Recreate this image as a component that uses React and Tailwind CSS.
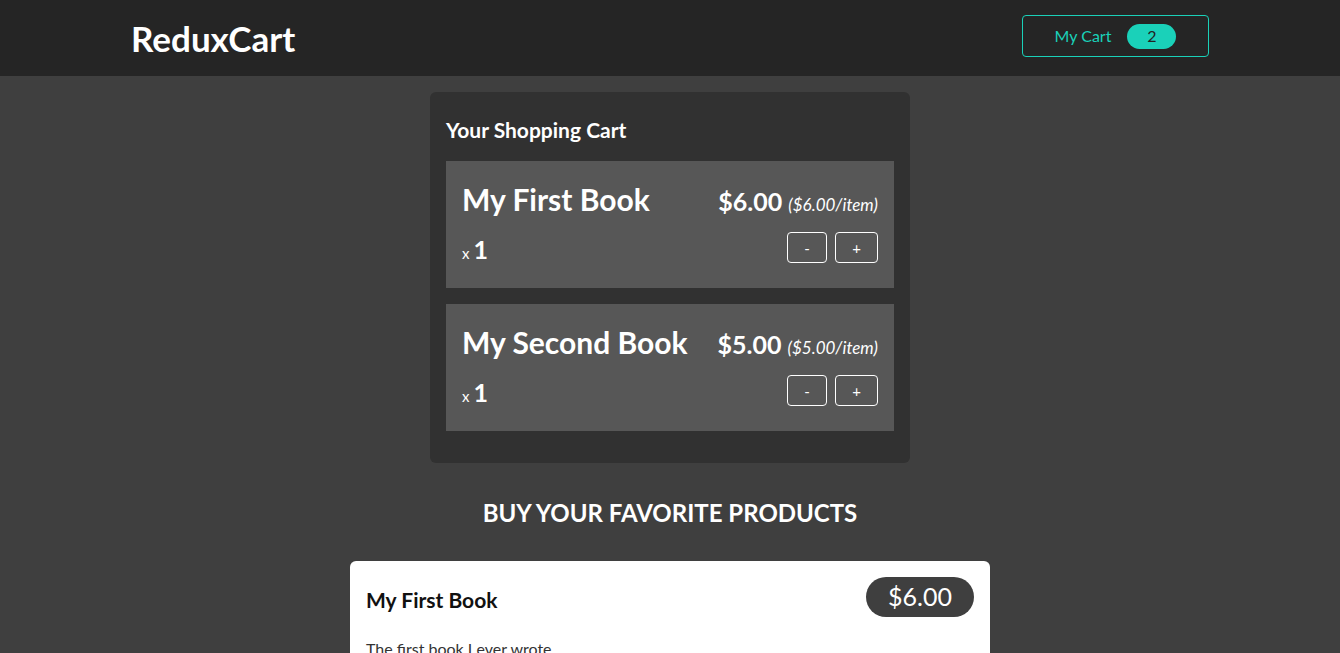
import React from "react";

const cartItems = [
  { id: 1, title: "My First Book", total: "$6.00", price: "$6.00", qty: 1 },
  { id: 2, title: "My Second Book", total: "$5.00", price: "$5.00", qty: 1 },
];

export default function App() {
  return (
    <div className="min-h-screen bg-[#3f3f3f] text-white font-['Lato','Noto_Sans',sans-serif]">
      {/* Header */}
      <header className="h-[76px] bg-[#252525]">
        <div className="w-[1078px] mx-auto h-full flex justify-between items-start">
          <h1 className="text-[35px] font-bold leading-[76px]">ReduxCart</h1>
          <button className="mt-[15px] h-[42px] w-[187px] border border-[#1ad1b9] rounded-[4px] flex items-center justify-center gap-4 text-[#1ad1b9] text-[16px]">
            <span>My Cart</span>
            <span className="bg-[#1ad1b9] text-[#222] rounded-full w-[49px] h-[25px] flex items-center justify-center text-[16px]">
              2
            </span>
          </button>
        </div>
      </header>

      <main className="flex flex-col items-center pt-4">
        {/* Cart */}
        <section className="w-[480px] bg-[#313131] rounded-[6px] px-4 pt-6 pb-8">
          <h2 className="text-[21px] font-bold mb-[17px] leading-[28px]">Your Shopping Cart</h2>
          <ul className="flex flex-col gap-4">
            {cartItems.map((item) => (
              <li key={item.id} className="bg-[#575757] h-[127px] px-4 pt-5">
                <div className="flex justify-between items-baseline">
                  <h3 className="text-[30px] font-bold leading-[36px]">{item.title}</h3>
                  <div className="text-[25px] font-bold">
                    {item.total}{" "}
                    <span className="text-[17px] font-normal italic">({item.price}/item)</span>
                  </div>
                </div>
                <div className="flex justify-between items-center mt-[7px]">
                  <div className="flex items-baseline gap-[4px] pt-[3px]">
                    <span className="text-[15px]">x</span>
                    <span className="text-[25px] font-bold">{item.qty}</span>
                  </div>
                  <div className="flex gap-2">
                    <button className="w-[40px] h-[31px] border border-white rounded-[4px] text-[15px]">-</button>
                    <button className="w-[43px] h-[31px] border border-white rounded-[4px] text-[15px]">+</button>
                  </div>
                </div>
              </li>
            ))}
          </ul>
        </section>

        {/* Products */}
        <h2 className="text-[24px] font-bold mt-[34px] mb-[32px] leading-[32px]">BUY YOUR FAVORITE PRODUCTS</h2>
        <div className="w-[640px] bg-white rounded-[6px] p-4 text-[#111]">
          <div className="flex justify-between items-center">
            <h3 className="text-[21px] font-bold pt-[5px]">My First Book</h3>
            <span className="bg-[#3f3f3f] text-white rounded-full px-[22px] h-[40px] flex items-center text-[25px]">
              $6.00
            </span>
          </div>
          <p className="mt-[20px] text-[16px] text-[#333]">The first book I ever wrote.</p>
        </div>
      </main>
    </div>
  );
}
